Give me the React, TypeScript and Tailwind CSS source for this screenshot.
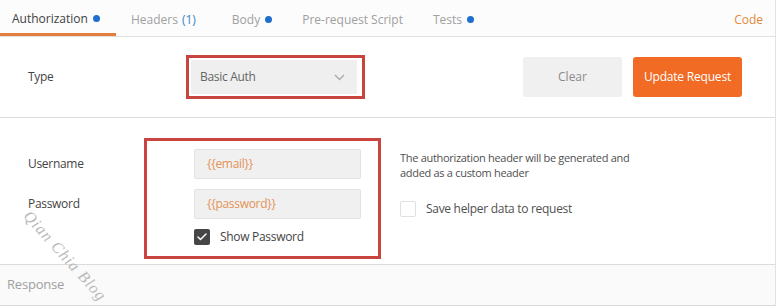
import { Check } from 'lucide-react'

const TABS = [
  { label: 'Authorization', dot: true, active: true },
  { label: 'Headers', count: '(1)' },
  { label: 'Body', dot: true },
  { label: 'Pre-request Script' },
  { label: 'Tests', dot: true },
]

function Dot() {
  return <span className="ml-[5px] inline-block h-[7px] w-[7px] rounded-full bg-[#1f6fce]" />
}

export default function App() {
  return (
    <div
      className="relative h-[307px] w-[778px] overflow-hidden bg-white text-[12px] text-[#505050]"
      style={{ fontFamily: '"Open Sans", "Noto Sans", sans-serif' }}
    >
      <div className="w-[776px] border-r border-[#e2e2e2]">
        {/* Tabs */}
        <div className="flex h-[37px] items-stretch border-b border-[#e0e0e0] bg-[#fcfcfc]">
          {TABS.map((t, i) => (
            <div
              key={t.label}
              className={
                t.active
                  ? 'flex items-center border-b-[3px] border-[#e47c3c] pb-[1px] pl-[12px] pr-[16px] pt-[5px] text-[#404040]'
                  : i === 1
                    ? 'flex items-center pl-[15px] pr-[21px] pt-[3px] text-[#a0a0a0]'
                    : 'flex items-center px-[15px] pt-[3px] text-[#a0a0a0]'
              }
            >
              <span>{t.label}</span>
              {t.count && <span className="ml-[4px] text-[#3b82c4]">{t.count}</span>}
              {t.dot && <Dot />}
            </div>
          ))}
          <div className="ml-auto flex items-center pr-[12px] pt-[3px] text-[#e0893f]">Code</div>
        </div>

        {/* Type row */}
        <div className="flex h-[81px] items-center border-b border-[#dcdcdc]">
          <div className="w-[186px] pl-[28px] text-[#444] tracking-[-0.3px]">Type</div>
          <div className="flex h-[44px] w-[179px] items-center border-[3px] border-[#c9433f] p-[2px]">
            <div className="flex h-full w-[166px] items-center justify-between bg-[#efefef] pl-[9px] pr-[12px] text-[#666] tracking-[-0.3px]">
              <span>Basic Auth</span>
              <svg width="11" height="7" viewBox="0 0 11 7" fill="none" stroke="#a8a8a8" strokeWidth="1.3">
                <polyline points="1,1 5.5,5.5 10,1" />
              </svg>
            </div>
          </div>
          <div className="ml-auto flex items-center gap-[11px] pr-[33px]">
            <button className="h-[40px] w-[99px] rounded-[2px] bg-[#f0f0f0] text-[#8a8a8a]">Clear</button>
            <button className="h-[40px] w-[109px] rounded-[3px] bg-[#f26b25] text-white tracking-[-0.2px]">
              Update Request
            </button>
          </div>
        </div>

        {/* Basic auth fields */}
        <div className="flex h-[147px] border-b border-[#dcdcdc] pt-[20px] tracking-[-0.3px]">
          <div className="flex w-[144px] flex-col gap-[10px] pl-[28px] pt-[11px] text-[#444]">
            <div className="flex h-[30px] items-center">Username</div>
            <div className="flex h-[30px] items-center">Password</div>
          </div>
          <div className="flex h-[121px] w-[237px] flex-col border-[3px] border-[#c9433f] pl-[47px] pt-[8px]">
            <div className="flex h-[30px] w-[167px] items-center rounded-[2px] border border-[#e2e2e2] bg-[#f0f0f0] pl-[12px] text-[#e59256]">
              {'{{email}}'}
            </div>
            <div className="mt-[10px] flex h-[30px] w-[167px] items-center rounded-[2px] border border-[#e2e2e2] bg-[#f0f0f0] pl-[12px] text-[#e59256]">
              {'{{password}}'}
            </div>
            <div className="mt-[9px] flex items-center gap-[10px] text-[#444]">
              <span className="flex h-[16px] w-[16px] items-center justify-center rounded-[2px] bg-[#464646]">
                <Check size={12} strokeWidth={3} color="#fff" />
              </span>
              <span>Show Password</span>
            </div>
          </div>
          <div className="ml-[19px] flex flex-col pt-[12px]">
            <p className="text-[11px] leading-[15px] text-[#505050]">
              The authorization header will be generated and
              <br />
              added as a custom header
            </p>
            <div className="mt-[20px] flex items-center gap-[10px] text-[#505050]">
              <span className="h-[16px] w-[16px] rounded-[2px] border border-[#e0e0e0] bg-white" />
              <span>Save helper data to request</span>
            </div>
          </div>
        </div>

        {/* Response bar */}
        <div className="flex h-[41px] items-center border-b border-[#d8d8d8] bg-[#fafafa] pl-[7px] text-[13px] text-[#a0a0a0] tracking-[-0.2px]">
          Response
        </div>
      </div>

      {/* Watermark */}
      <div
        className="pointer-events-none absolute left-[65px] top-[256px] -translate-x-1/2 -translate-y-1/2 rotate-[48deg] whitespace-nowrap text-[16px] italic tracking-[1px] text-[#b8b8b8]"
        style={{ fontFamily: '"Liberation Serif", serif' }}
      >
        Qian Chia Blog
      </div>
    </div>
  )
}
